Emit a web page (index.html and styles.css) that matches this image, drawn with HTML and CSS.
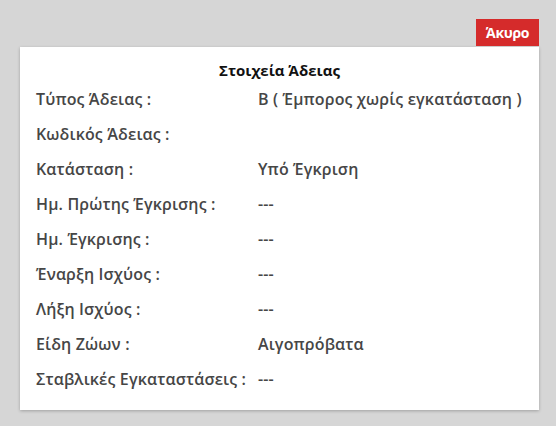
FILE: index.html
```html
<!DOCTYPE html>
<html lang="el">
<head>
<meta charset="utf-8">
<link rel="stylesheet" href="styles.css">
</head>
<body>
<div class="page">
  <div class="toolbar">
    <button class="cancel">Άκυρο</button>
  </div>
  <div class="card">
    <h2 class="title">Στοιχεία Άδειας</h2>
    <div class="grid">
      <div class="label">Τύπος Άδειας :</div><div class="value">Β ( Έμπορος χωρίς εγκατάσταση )</div>
      <div class="label">Κωδικός Άδειας :</div><div class="value"></div>
      <div class="label">Κατάσταση :</div><div class="value">Υπό Έγκριση</div>
      <div class="label">Ημ. Πρώτης Έγκρισης :</div><div class="value">---</div>
      <div class="label">Ημ. Έγκρισης :</div><div class="value">---</div>
      <div class="label">Έναρξη Ισχύος :</div><div class="value">---</div>
      <div class="label">Λήξη Ισχύος :</div><div class="value">---</div>
      <div class="label">Είδη Ζώων :</div><div class="value">Αιγοπρόβατα</div>
      <div class="label">Σταβλικές Εγκαταστάσεις :</div><div class="value">---</div>
    </div>
  </div>
</div>
</body>
</html>
```
FILE: styles.css
```css
html, body {
  margin: 0;
  padding: 0;
}
body {
  background: #d6d6d6;
  font-family: "Open Sans", "Noto Sans", sans-serif;
  width: 556px;
  height: 426px;
  overflow: hidden;
}
.page {
  padding: 19px 0 0 20px;
  width: 519px;
}
.toolbar {
  display: flex;
  justify-content: flex-end;
}
.cancel {
  background: #d52b2b;
  color: #fff;
  border: 0;
  margin: 0;
  padding: 0;
  width: 63px;
  height: 27px;
  font-family: "Open Sans", sans-serif;
  font-weight: 700;
  font-size: 14px;
  line-height: 27px;
  letter-spacing: -0.3px;
}
.card {
  margin-top: 1px;
  background: #fff;
  box-shadow: 0 1px 3px rgba(0,0,0,0.25);
  padding: 13px 16px 12px;
  height: 338px;
}
.title {
  margin: 0 0 1px;
  text-align: center;
  font-size: 15px;
  line-height: 20px;
  font-weight: 700;
  color: #111;
}
.grid {
  display: grid;
  grid-template-columns: 222px 1fr;
  grid-auto-rows: 35px;
  align-items: center;
  font-size: 16px;
  font-weight: 600;
  letter-spacing: 0.15px;
  color: #464646;
}
.label, .value {
  line-height: 20px;
  white-space: nowrap;
}
```
